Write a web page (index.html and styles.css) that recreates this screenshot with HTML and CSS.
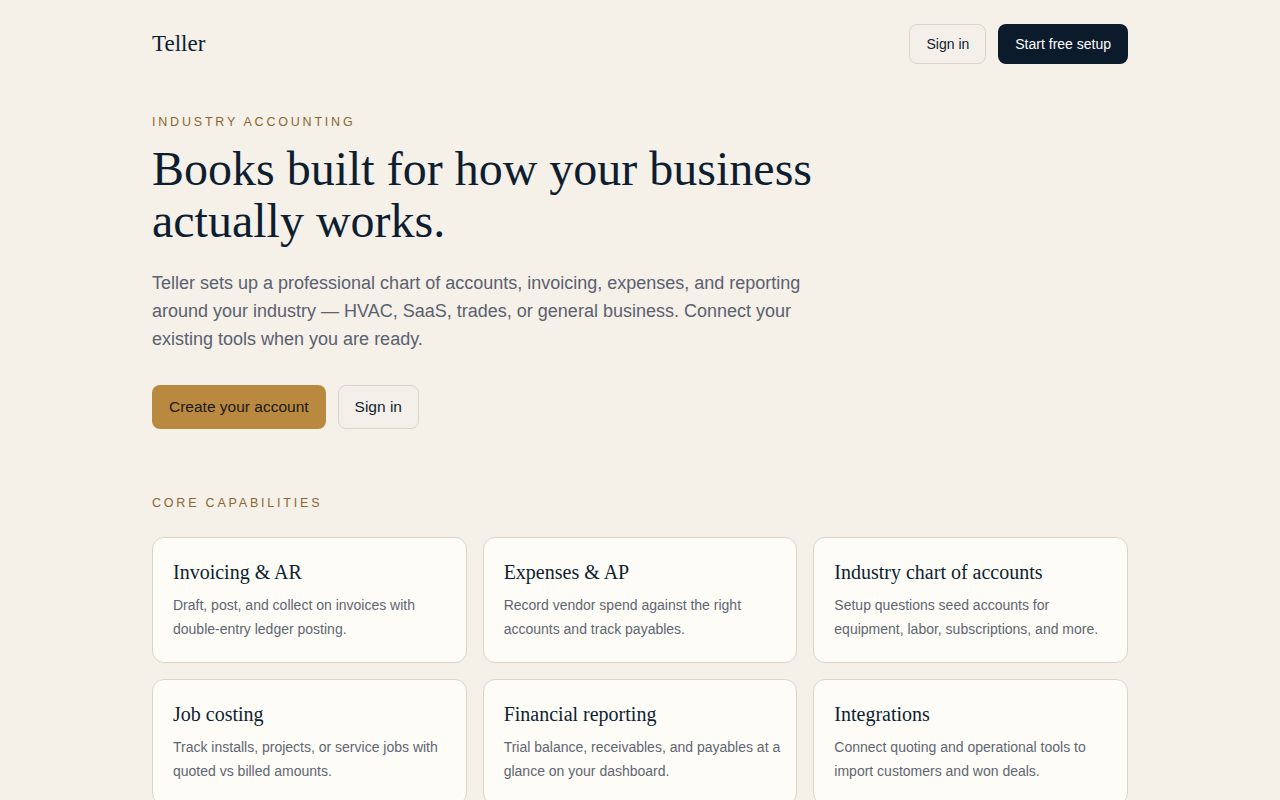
FILE: index.html
```html
<!DOCTYPE html>
<html lang="en">
<head>
<meta charset="utf-8">
<title>Teller</title>
<link rel="stylesheet" href="styles.css">
</head>
<body>
<div class="page">
  <header class="nav">
    <div class="brand">Teller</div>
    <div class="nav-actions">
      <a class="btn btn-ghost btn-sm" href="#">Sign in</a>
      <a class="btn btn-dark btn-sm" href="#">Start free setup</a>
    </div>
  </header>

  <main>
    <section class="hero">
      <p class="eyebrow">Industry accounting</p>
      <h1 class="headline">Books built for how your business actually works.</h1>
      <p class="lead">Teller sets up a professional chart of accounts, invoicing, expenses, and reporting around your industry — HVAC, SaaS, trades, or general business. Connect your existing tools when you are ready.</p>
      <div class="hero-actions">
        <a class="btn btn-gold" href="#">Create your account</a>
        <a class="btn btn-ghost" href="#">Sign in</a>
      </div>
    </section>

    <section class="capabilities">
      <p class="eyebrow">Core capabilities</p>
      <div class="grid">
        <div class="card">
          <h3 class="card-title">Invoicing &amp; AR</h3>
          <p class="card-text">Draft, post, and collect on invoices with double-entry ledger posting.</p>
        </div>
        <div class="card">
          <h3 class="card-title">Expenses &amp; AP</h3>
          <p class="card-text">Record vendor spend against the right accounts and track payables.</p>
        </div>
        <div class="card">
          <h3 class="card-title">Industry chart of accounts</h3>
          <p class="card-text">Setup questions seed accounts for equipment, labor, subscriptions, and more.</p>
        </div>
        <div class="card">
          <h3 class="card-title">Job costing</h3>
          <p class="card-text">Track installs, projects, or service jobs with quoted vs billed amounts.</p>
        </div>
        <div class="card">
          <h3 class="card-title">Financial reporting</h3>
          <p class="card-text">Trial balance, receivables, and payables at a glance on your dashboard.</p>
        </div>
        <div class="card">
          <h3 class="card-title">Integrations</h3>
          <p class="card-text">Connect quoting and operational tools to import customers and won deals.</p>
        </div>
      </div>
    </section>
  </main>
</div>
</body>
</html>
```

FILE: styles.css
```css
* { box-sizing: border-box; }

html, body {
  margin: 0;
  padding: 0;
  background: #f5f0e8;
}

body {
  font-family: "Liberation Sans", Arial, sans-serif;
  color: #0e1e31;
}

.page {
  max-width: 976px;
  margin: 0 auto;
}

.nav {
  display: flex;
  align-items: center;
  justify-content: space-between;
  padding-top: 24px;
}

.brand {
  font-family: "Liberation Serif", "Times New Roman", serif;
  font-size: 23px;
  color: #0e1e31;
}

.nav-actions {
  display: flex;
  gap: 12px;
}

.btn {
  display: inline-flex;
  align-items: center;
  justify-content: center;
  height: 44px;
  padding: 0 16px;
  border-radius: 8px;
  font-size: 15.5px;
  text-decoration: none;
  border: 1px solid transparent;
  color: #0e1e31;
}

.btn-sm {
  height: 40px;
  font-size: 14px;
  padding: 0 16px;
}

.btn-ghost {
  background: #f4efe9;
  border-color: #ddd3c8;
  color: #0e1e31;
}

.btn-dark {
  background: #0c1b2c;
  color: #ffffff;
}

.btn-gold {
  background: #b8893e;
  color: #1a1a16;
}

.hero {
  padding-top: 48px;
}

.eyebrow {
  margin: 0;
  font-size: 12.5px;
  line-height: 20px;
  letter-spacing: 2.8px;
  text-transform: uppercase;
  color: #8b6631;
}

.headline {
  margin: 11px 0 0;
  max-width: 680px;
  font-family: "Liberation Serif", "Times New Roman", serif;
  font-weight: 400;
  font-size: 48px;
  line-height: 52px;
  color: #0e1e31;
}

.lead {
  margin: 22px 0 0;
  max-width: 680px;
  font-size: 18px;
  line-height: 28px;
  color: #5a6170;
}

.hero-actions {
  display: flex;
  gap: 12px;
  margin-top: 32px;
}

.capabilities {
  margin-top: 64px;
}

.grid {
  display: grid;
  grid-template-columns: repeat(3, 1fr);
  gap: 16px;
  margin-top: 24px;
}

.card {
  background: #fdfcf7;
  border: 1px solid #ddd4c7;
  border-radius: 12px;
  padding: 20px 16px 21px 20px;
}

.card-title {
  margin: 0;
  font-family: "Liberation Serif", "Times New Roman", serif;
  font-weight: 400;
  font-size: 20px;
  line-height: 28px;
  color: #0e1e31;
}

.card-text {
  margin: 7px 0 0;
  font-size: 14px;
  line-height: 24px;
  color: #5f6672;
}
```
